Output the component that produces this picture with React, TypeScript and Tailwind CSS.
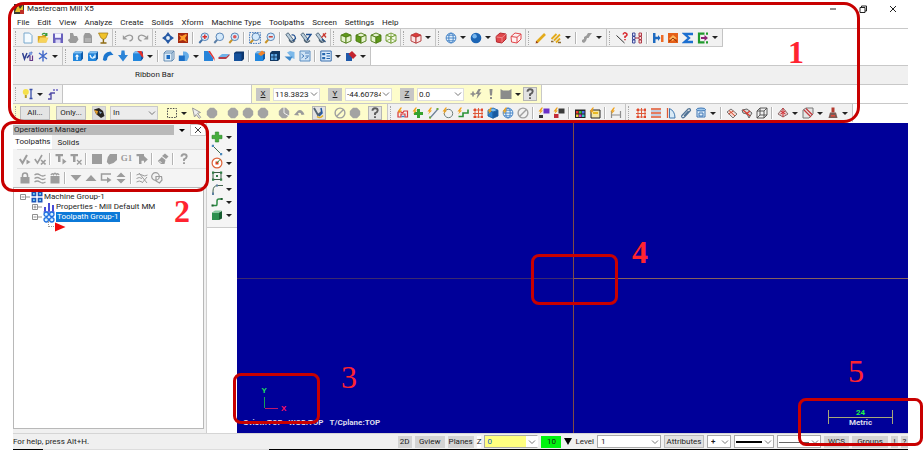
import type { ReactNode } from "react";

// Small shape helpers shared by the toolbar glyphs, all on a 12x12 grid
const line = (d: string, stroke: string, w = 1.2) => (
  <path d={d} fill="none" stroke={stroke} strokeWidth={w} />
);

const cube = (stroke: string, top: string, left: string, right: string) => (
  <g stroke={stroke} strokeWidth=".9" strokeLinejoin="round">
    <path d="M1 3.2 6 1l5 2.2L6 5.2z" fill={top} />
    <path d="M1 3.2 6 5.2v6L1 9z" fill={left} />
    <path d="M11 3.2 6 5.2v6L11 9z" fill={right} />
  </g>
);

const lens = (mark: ReactNode, handle = "#c99325") => (
  <>
    <path d="M4.3 7.7 1.3 11" stroke={handle} strokeWidth="2" />
    <circle cx="6.8" cy="4.8" r="3.8" fill="#d4e9fb" stroke="#5b87b8" />
    {mark}
  </>
);

const box = (mark: ReactNode, face = "#2186dd") => (
  <>
    <path d="M1 3.5 3 1.5h8v7L9 11H1z" fill="#0f5cab" />
    <path d="M1 3.5h8V11H1z" fill={face} />
    <path d="m1 3.5 2-2h8l-2 2z" fill="#7cc0f5" />
    {mark}
  </>
);

const globe = (
  <g fill="none" stroke="#3f7fc4" strokeWidth=".9">
    <circle cx="6" cy="6" r="4.9" fill="#e3f0fb" />
    <ellipse cx="6" cy="6" rx="2.2" ry="4.9" />
    <path d="M1 6h10M2 3.2h8M2 8.8h8" />
  </g>
);

const pen = (hook: string) => (
  <>
    <path d="m.8 2.5 2.4-1.7L8.5 8 6 9.5z" fill="#b9cddc" stroke="#4e6478" strokeWidth=".9" />
    {line(hook, "#1f4f91", 1.3)}
    {line("M4 7.5Q6 12.5 10 8.5", "#4b5f70", 1.3)}
  </>
);

const grid = (stroke: string, dot: string) => (
  <>
    {line("M1 3h10M1 6.5h10M1 10h10M3 1v10M6.5 1v10M10 1v10", stroke, 1)}
    <path d="M2 2h2v2H2zM9 2h2v2H9zM2 9h2v2H2zM9 9h2v2H9z" fill={dot} />
  </>
);

const oct = <path d="M4 .8h4L11.2 4v4L8 11.2H4L.8 8V4z" fill="#a3a3a3" />;
const spark = <path d="m3.5.5-3 4h2L1 7.5 5 3.6H3.2L5 .5z" fill="#f0a21b" />;
const question = (color: string) => line("M3.5 3.8Q3.5 1.3 6 1.3 8.7 1.3 8.7 3.6 8.7 5 6 6.4v1.5M6 9.2V11", color, 1.9);

const ICONS: Record<string, ReactNode> = {
  new: <path d="M2 1h5.5L10 3.5V11H2z" fill="#f5fbff" stroke="#79a8cd" />,
  open: <><path d="M.8 4h4l1-1h3.4v7.5H.8z" fill="#d9a520" /><path d="m1 10.5 2-5h8.5l-2 5z" fill="#f7d35a" />{line("M5 2.6Q7.5 0 9.5 3M9.8 1v2.3H7.6", "#35983b", 1.3)}</>,
  save: <><path d="M1 1.5h10V11H1z" fill="#6960bd" /><path d="M3 1.5h6v4.3H3z" fill="#f2f2ff" /><path d="M3.5 7.5h5V11h-5z" fill="#d8d5f4" /></>,
  puff: <path d="M3 1h3l1 3h3l1.5 3.5L9 11H3L.8 8 3 6.5z" fill="#9b9b9b" />,
  print: <><path d="M3 1h4.5L10 3.5V11H1.5V4z" fill="#9a9a9a" />{line("M3 7h6M3 9h6", "#c9c9c9", 1)}</>,
  cup: <><path d="M1.5 1H11L9 6 6.7 7.4 4 6z" fill="#f0c22a" stroke="#9c7615" strokeWidth=".7" />{line("M6.4 7v3.5M3.5 11h6", "#8e6b12", 1.4)}</>,
  undo: <>{line("M3 5Q8 1.5 10.3 4.5 11.5 8 7.5 9", "#9b9b9b", 1.4)}<path d="M.8 3v4.5h4.7z" fill="#9b9b9b" /></>,
  redo: <>{line("M9 5Q4 1.5 1.7 4.5.5 8 4.5 9", "#9b9b9b", 1.4)}<path d="M11.2 3v4.5H6.5z" fill="#9b9b9b" /></>,
  fit: <><path d="M6 0 8.5 3.5 12 6 8.5 8.5 6 12 3.5 8.5 0 6l3.5-2.5z" fill="#2559a5" /><circle cx="6" cy="6" r="1.9" fill="#e6f1fa" /></>,
  repaint: <><path d="M1 1h10v10H1z" fill="#a52a12" /><path d="m2 3 3 1 4-2 1 1-2 3 2 4-4-2-4 1 2-3z" fill="#ff9d2d" /></>,
  zoomIn: lens(line("M6.8 2.5v4.6M4.5 4.8h4.6", "#d9302c", 1.4), "#3f6ea6"),
  zoom: lens(null, "#5b7ea6"),
  zoomDot: lens(<circle cx="6.8" cy="4.8" r="1.8" fill="#de5757" />),
  zoomFrame: lens(<path d="M.6.6h10.8v10.8H.6z" fill="none" stroke="#3d77bd" strokeDasharray="1.5 1" />),
  zoomOut: lens(line("M4.8 4.8h4", "#c63328", 1.4)),
  penA: pen("M6.5 3Q10 2 10.5 6.5L8 9"),
  penB: pen("M6 2.5h5L7 8"),
  penC: <>{pen("M7 7l3.5 3")}{line("M6.5 5.5 11 1M8 1.5l3 4", "#cb3830", 1.3)}</>,
  cubeTop: cube("#4c7a12", "#5f9a1b", "#e6f3cf", "#e6f3cf"),
  cubeLeft: cube("#4c7a12", "#e6f3cf", "#5f9a1b", "#e6f3cf"),
  cubeRight: cube("#4c7a12", "#e6f3cf", "#e6f3cf", "#5f9a1b"),
  cubeIso: <>{cube("#6d9a2f", "#f6fbea", "#f6fbea", "#f6fbea")}{line("m1 9 5-2.5L11 9M6 1v5.5", "#6d9a2f", 0.7)}</>,
  cubeRed: cube("#b33434", "#e03b3b", "#fbe5e5", "#fbe5e5"),
  globe,
  ball: <><circle cx="6" cy="6" r="5.3" fill="#1c65b5" /><circle cx="4.6" cy="4.2" r="2.2" fill="#75b5ee" /></>,
  redSolid: <><path d="m1 4.5 4-3.5 6 1v5L7 11 1.5 10z" fill="#e0474b" stroke="#b52a30" />{line("m1.5 5 5.5.7 4-3.5M7 6v4.5", "#f39a9c", 0.8)}</>,
  redWire: <path d="m1 4.5 4-3.5 6 1v5L7 11 1.5 10zM1 4.5l6 .8L11 2M7 5.3V11" fill="#fff0f1" stroke="#e0474b" />,
  pencil: <><path d="M1.5 10.5 10 2" stroke="#e3aa1b" strokeWidth="2.6" /><path d="m.5 11.5.8-2.5L3 10.7z" fill="#8d3021" /></>,
  pencils: <><path d="m1.5 7 5-5M4 8.5l6-6M6 10.5l4-4" stroke="#e3aa1b" strokeWidth="1.8" />{line("M1 9.5h2.5M8 10.5h3", "#8a6a35", 1.5)}</>,
  greyStack: <path d="M1 10V8l2-1V5l2.5-1.5L7 1h4L9 3.5 7.5 6H6L5 9l-2 2z" fill="#9b9b9b" />,
  analyze: <>{line("m.5 3.5 8 7.5", "#333", 1)}{line("M7 2.5Q8-.2 10.5 1.5 12 3.5 9 4.5V6M9 7v1.3", "#d8252a", 1.5)}</>,
  chain: <><path d="M1.5 1H4v3H1.5zM1.5 4.5H4v3H1.5zM1.5 8H4v3H1.5z" fill="#dfe4ff" stroke="#2f3d8f" strokeWidth=".9" /><path d="M8 1h2.5v3H8zM8 4.5h2.5v3H8zM8 8h2.5v3H8z" fill="#ffd9d9" stroke="#a82d3a" strokeWidth=".9" />{line("M4 6h4", "#a82d3a", 1)}</>,
  compare: <><path d="M1 1h2.5v10H1z" fill="#1d6ac0" /><path d="M3 4.8h3V3l2.5 3L6 9V7.2H3z" fill="#1d6ac0" /><path d="M9 3h2.5v7H9z" fill="#ee6a25" /></>,
  orange: <><path d="M1 1h10v10H1z" fill="#e45f18" /><path d="m2 7 4-4 4 3.5-3 .5-1 2z" fill="#ffb75e" />{line("M2 9.5 6 6l4 3.5", "#8e3208", 1)}</>,
  sigma: line("M11 2H2.5L7 6l-4.5 4H11", "#1c6fd0", 2.3),
  bracket: <>{line("M7.5 1.7H2v8.6h5.5M9 1.7h2M9 10.3h2", "#20992c", 2.2)}<path d="M4 5h3.5V3L11 6 7.5 9V7H4z" fill="#8c2475" /></>,

  tool: <>{line("m.5 3 2 6L5 3M5 8l5-6", "#2e3f91", 1.5)}<circle cx="8.5" cy="3.5" r="1.7" fill="#7c9ce0" />{line("M8 5.5v5h2.5v-5", "#653889", 1.2)}</>,
  asterisk: line("M6 .5v11M2 3l8 6M10 3 2 9", "#4068c8", 1.4),
  extrude: box(<path d="M4.3 10V6.5H2.8L5 4.2l2.3 2.3H5.8V10z" fill="#fff" />),
  revolve: box(line("M3 5q1.5 5 5 2M8 4.5V7H6", "#e5f4ff", 1.3)),
  sweep: <path d="M.8 10Q1 2 8.5 1.5l3 3.5Q5 4.5 5 10L3 11z" fill="#1c76ce" />,
  loft: <path d="M4.5.5h3L8 5h3l-5 6.5L1 5h3z" fill="#2b84d8" />,
  fillet: box(<path d="M5 1h4.5Q11.5 4 11.5 8L9 6Q8 3.5 5 1z" fill="#e2312c" />),
  shell: <><path d="m1 3 2-2h8v8l-2 2H1z" fill="#dcebf7" stroke="#4d79a5" strokeWidth=".8" /><path d="M3.5 5H7v4H3.5z" fill="#1c6cc2" />{line("M1 3h8v8M9 3l2-2", "#4d79a5", 0.8)}</>,
  bool: <><path d="M5 1.5Q11 1 11 7L9 11H5z" fill="#67aee9" /><path d="M.8 5.5h6V11h-6z" fill="#1b6fc6" /></>,
  draft: <><path d="M1 1h4l5 7v3H1z" fill="#2784d9" /><path d="M5 1h2l4.5 7v3L10 8z" fill="#df3434" /></>,
  slab: <><path d="M.5 7 4 4h7.5L8 7z" fill="#6eb1e8" /><path d="M.5 7H8l3.5-3v1.5L8 9H.5z" fill="#b23b49" /></>,
  block: <><path d="m1 3 2-1.5h8V9l-2 2H1z" fill="#0d376e" /><path d="M1 3.5h7.5V11H1z" fill="#14509a" /></>,
  pull: box(<path d="m4 4 4-3.500L11.500 3 7 6z" fill="#f08229" />),
  panes: <><path d="m1 3 2-2h8v8l-2 2H1z" fill="#123862" /><path d="M2 4h2.5v2.5H2zM5.5 4H8v2.5H5.5zM2 7.5h2.5V10H2zM5.5 7.5H8V10H5.5z" fill="#5ea6e2" /></>,
  drop: <><path d="M3 2.5 6 1l4.500 1v7L8 8z" fill="#7db9ea" /><path d="M.5 6.5h8L6 11z" fill="#3d87c9" /></>,
  layout: <><path d="M1 1h10v10H1z" fill="#cfe3f5" stroke="#5a8ec2" />{line("M2.5 4 5 6 2.5 8M6 3h4M6.5 6H10M6 9l3-2", "#3a73b3", 0.9)}</>,
  list: <><path d="M.8 1h10.4v10H.8z" fill="#dcebfa" stroke="#386fae" /><path d="M2.2 3h3v2.3h-3zM2.2 7h3v2.3h-3z" fill="#2667ae" />{line("M6.5 3.5H10M6.5 6H10M6.5 8.5H10", "#2667ae", 1)}</>,
  merge: <><path d="M1 3h6v8H1z" fill="#1f59a9" /><path d="M3.5 4 7 1l4.5 4.5L8 9z" fill="#c4242f" /></>,

  bulb: <><circle cx="3.8" cy="4" r="3" fill="#f5e04a" /><path d="M2.8 7h2v3h-2z" fill="#b59d2d" />{line("M9 1.5v9M7.5 1.5h3M7.5 10.5h3", "#3a4fa8", 1.3)}</>,
  route: <>{line("M1 11h3V5h4M2 7l2-2", "#514ba5", 1.4)}<path d="M6 1h2v2H6zM9 1h2v2H9z" fill="#8e88d0" /></>,
  plusBolt: <>{line("M.5 6h5M3 3.5v5", "#8b8b8b", 1.6)}<path d="m8.5 1-3 5h2.3l-1.3 5 5-6.5H9L11 1z" fill="#8b8b8b" /></>,
  bang: <path d="M4.5 1h3L7 7.5H5zM5 9h2v2H5z" fill="#8b8b8b" />,
  slabGrey: <path d="M.5 1 3 2.5h6L11.5 1v10H.5z" fill="#8b8b8b" />,
  question: question("#5d5d5d"),

  picker: <><path d="M1 2.5 6 1l4 3 1.5 5L8 11 3 7z" fill="#26231f" /><path d="m1 3 4 1-1 4z" fill="#e8a02a" /><path d="m6 4 3 1.5L7 7z" fill="#8aa9c9" /></>,
  marquee: <path d="M1.5 1.5h9v9h-9z" fill="none" stroke="#4b4b4b" strokeDasharray="1.5 1.2" />,
  cursor: <path d="m1.5 1 8 4.5-3 .8 3.2 4-1.5 1-3-3.8L3.500 10z" fill="#ededed" stroke="#9a9a9a" />,
  oct,
  octCut: <>{oct}{line("M6 6V.5M6 6l5 3", "#f0f0f0", 1)}</>,
  back: <path d="M1 8 5 3.5q4-2 6.5 4l-3 .5Q8 5 5 6l1 2.5z" fill="#9b9b9b" />,
  pick: <>{line("m1 1 4 7 3.5-3", "#506172", 1.8)}{line("M4 9.5q3 2.5 6-1", "#e2b12a", 1.5)}{line("M8 1 9 6 6 9", "#2156a0", 1.5)}</>,
  none: <>{line("M2.5 9.5l7-7", "#a0a0a0", 1.4)}<circle cx="6" cy="6" r="4.9" fill="none" stroke="#a0a0a0" strokeWidth="1.4" /></>,
  snap: <>{line("M1 10V5.5Q2 3.5 4 5t3-1h3.5V10H8V7H4v3z", "#d9363a", 1.2)}{line("M4.5 9.5h3", "#3f7fc4", 1.4)}{spark}</>,
  plus: <path d="M4.3 1h3.4v3.300H11v3.400H7.700V11H4.300V7.700H1V4.300h3.300z" fill="#45ad3c" stroke="#2a8528" strokeWidth=".6" />,
  plusSpark: <><path d="M5 2h3v3h3v3H8v3H5V8H2V5h3z" fill="#35a22e" />{spark}</>,
  endpoint: <>{line("M3 11 10.5 2.5", "#6d7f96", 1.2)}{spark}<path d="M9.5 1h2v2h-2zM2 9.5h2v2H2z" fill="#69a83c" /></>,
  circle: <><circle cx="6.5" cy="6.5" r="4.2" fill="none" stroke="#6f7f7c" />{spark}</>,
  curveSpark: <>{line("M1.5 9.5H6V6h5V2.5", "#2b9235", 1.6)}{spark}</>,
  gridRed: grid("#de5a3a", "#e2452c"),
  cubeBlue: <>{cube("#1b62a6", "#7cbdee", "#2a81cf", "#17599f")}{spark}</>,
  globeSpark: <>{globe}{spark}</>,
  purple: <><path d="M5.5 1.5h6v5h-6z" fill="#6a2fc9" /><path d="M1 8h4v3H1z" fill="#333" />{spark}</>,
  redSq: <><path d="M5.5 1.5h6v5h-6z" fill="#3a3a3a" /><path d="M1 7h4.5v4H1z" fill="#c22b3a" />{spark}</>,
  palette: <><path d="M1 2.5h10.5V11H1z" fill="#222" /><path d="M2 4h2.5v2.5H2z" fill="#ef3f33" /><path d="M5 4h2.5v2.5H5z" fill="#37c441" /><path d="M8 4h2.5v2.5H8z" fill="#4c6df0" /><path d="M2 7.5h2.5V10H2z" fill="#f2d33d" /><path d="M5 7.5h2.5V10H5z" fill="#d43fce" /><path d="M8 7.5h2.5V10H8z" fill="#36c6c6" /></>,
  colorBox: <><path d="M2 3h9v8H2z" fill="#f4e6a3" stroke="#252525" /><path d="M4 5h5v2H4z" fill="#e8b923" />{spark}</>,
  dimension: <>{line("M1.5 4v7M10.5 4v7M2 8h8.5", "#8d8d8d", 1.2)}{spark}</>,
  rowsRed: <>{line("M1 2h10M1 6h10M1 10h10", "#e0552f", 1.5)}{line("M1 4h10M1 8h10", "#6f91bf", 0.7)}</>,
  sector: <><path d="M2.5 1v10" stroke="#dd5b35" strokeWidth="1.3" /><path d="M4.5 1.5Q10 4 10 11H4.5z" fill="#d9eaf6" stroke="#3f78b1" /></>,
  clip: line("M1.5 9 8 2q2.5-1 2.5 1.5l-6 6.5Q2 12 1.5 9M4 9l4.5-5", "#4f7295", 1.2),
  cylinder: <><path d="M2 2.5h8V10H2z" fill="#e1effb" stroke="#3c74b3" /><ellipse cx="6" cy="2.5" rx="4.5" ry="1.5" fill="#9dc7ec" stroke="#3c74b3" />{line("M4 6h4v3H4z", "#3c74b3", 1)}</>,
  meshA: <><path d="m1 5 4-3 6 5-4 4z" fill="#f5d8d0" stroke="#777" />{line("m3 3.5 6 5.5M2.5 7l5-3", "#d6492e", 1)}</>,
  meshB: <><path d="m1 3 5-1 5 4-3 5-2-4-4-1z" fill="#d8d8d8" stroke="#666" />{line("M2 3l7 6M9 4 5 7", "#d6392e", 1.2)}</>,
  wire: line("M1 4h7v7H1zM4 1h7v7M1 4l3-3M8 4l3-3M8 11l3-3M4 1v7h7M1 11l3-3", "#4b4b4b", 0.9),
  prism: <><path d="m6 1 5 6-5 3-5-3z" fill="#e6cccc" stroke="#8a6a6a" />{line("M6 1v9M3.5 4l5 3M8.5 4l-5 3", "#d12f35", 1)}</>,
  hatch: <><path d="M1 3 4 1h7v6l-4 4H1z" fill="#e6e6e6" stroke="#777" />{line("m2 3 7 7M4 1.5 10.5 8", "#c5393d", 1.3)}</>,
  mill: <><path d="M4.5.5h3v5h-3z" fill="#b33a2f" /><path d="M3 5.5h6l1.500 5.500h-9z" fill="#7c5a54" /><path d="M4 8h4v1.5H4z" fill="#e14a3c" /></>,

  line: <>{line("m2 2 8 8", "#3d6a4a", 1)}<path d="M.8.8H3V3H.8zM9 9h2.2v2.2H9z" fill="#4a87b9" /></>,
  arcCircle: <><circle cx="6" cy="6" r="4.9" fill="#fff" stroke="#dd6339" strokeWidth="1.2" /><path d="M4.5 4.5h3v3h-3z" fill="#e2411f" />{line("m6 6 3-3.5", "#2a9140", 1)}</>,
  rect: <><path d="M2 2.5h8v7H2z" fill="none" stroke="#3b5c45" /><path d="M1 1.5h2.2v2.2H1zM9 1.5h2.200v2.200H9zM1 8.500h2.200v2.200H1zM9 8.500h2.200v2.200H9zM5 5h2v2H5z" fill="#2f7c45" /></>,
  filletLine: <>{line("M2 11V8Q2 2.5 7 2.5h5", "#44654f", 1)}<path d="M1 9.5h2V12H1zM5 1.5h2v2H5z" fill="#5c7f9f" /></>,
  curve: <>{line("M1.5 9.5h4Q6 9.5 6 7V5q0-2 2-2h3", "#2c8b43", 1.5)}<path d="M.5 8.5h2v2h-2zM9.7 2h2v2h-2z" fill="#205e30" /></>,
  solidGreen: <><path d="M1 3.5h7V11H1z" fill="#2b8f4e" /><path d="M8 3.5 11 2v7.5L8 11z" fill="#165c30" /><path d="m1 3.5 3-2h7l-3 2z" fill="#85caa0" /></>,

  chkRun: <>{line("m.8 6 2.7 4L8 2", "#9c9c9c", 2)}<path d="M7.5 6.5v5l4-2.5z" fill="#9c9c9c" /></>,
  chkX: line("m.8 6 2.7 4L8 2M7 7l4.5 4.5M11.5 7 7 11.5", "#9c9c9c", 1.6),
  tRun: <><path d="M.5 1H8v2.3H5.5V9H3V3.3H.5z" fill="#9c9c9c" /><path d="M7.5 5.5v6l4-3z" fill="#9c9c9c" /></>,
  tX: <><path d="M.5 1H8v2.3H5.5V9H3V3.3H.5z" fill="#9c9c9c" />{line("m7 7 4.5 4.5M11.5 7 7 11.5", "#9c9c9c", 1.3)}</>,
  sq: <path d="M1 1h10v10H1z" fill="#9c9c9c" />,
  lump: <path d="M4 1h7v6l-3.500 3L3 11.500.8 9l1-5z" fill="#9c9c9c" />,
  tArrow: <path d="M.5 1H8v2l3.8 3.5L8 10V7.7H5.5V11H3V3.3H.5z" fill="#9c9c9c" />,
  feed: <><path d="m5 3 3-2.5 3.5 3L9 6z" fill="#9c9c9c" /><path d="m.8 8 4-4 3.7 3-1 4H4z" fill="#9c9c9c" />{line("m2.5 8 2 2", "#f4f4f4", 1)}</>,
  questionGrey: question("#9c9c9c"),
  lock: <><path d="M1.5 5h9v6.5h-9z" fill="#9c9c9c" />{line("M3.5 5V3.5Q3.5 1 6 1t2.5 2.5V5", "#9c9c9c", 1.5)}</>,
  waves: line("M.5 3q2.700-2 5.500 0t5.500 0M.5 6.500q2.700-2 5.500 0t5.500 0M.5 10q2.700-2 5.500 0t5.500 0", "#9c9c9c", 1.3),
  bag: <><path d="M1.5 4h9v7.5h-9z" fill="#9c9c9c" />{line("M2 3q1-2 2.5-.5Q6 0 7.5 2.5 9 1 10 3", "#9c9c9c", 1.5)}</>,
  down: <path d="M.5 3h11L6 9z" fill="#9c9c9c" />,
  up: <path d="M.5 9h11L6 3z" fill="#9c9c9c" />,
  insert: <>{line("M11 2H1.5v6H8", "#9c9c9c", 1.5)}<path d="M7 5v6l4.5-3z" fill="#9c9c9c" /></>,
  scroll: <path d="M6 .5 10.500 5h-9zM6 11.500 1.500 7h9z" fill="#9c9c9c" />,
  wavesX: line("M.5 3q2.700-2 5.500 0t5.500 0M.5 6.500q2.700-2 5.500 0M.5 10q2.700-2 5.500 0M3 1l8 10M11 5l-5 6", "#9c9c9c", 1),
  overlap: <g fill="none" stroke="#9c9c9c" strokeWidth="1.2"><circle cx="4.5" cy="4.5" r="3.8" /><path d="M5 4.5h5.5L11 8l-2.500 3L5 9z" /></g>,

  app: <><path d="M1 1h10v10H1z" fill="#3b3b32" /><path d="m2 9 3-7 2 4 3-4v7z" fill="#e5c12c" /><path d="M7 7h4v4H7z" fill="#bf3026" /></>,
  group: <><path d="M.5.5h4.800v4.800H.5zM6.700.5h4.800v4.800H6.700zM.5 6.700h4.800v4.800H.5zM6.700 6.700h4.800v4.800H6.700z" fill="#1c55b8" /><path d="M2 2h1.800v1.800H2zM8.200 2H10v1.800H8.200zM2 8.200h1.800V10H2zM8.200 8.200H10V10H8.200z" fill="#6fd3f2" /></>,
  bars: <>{line("M2 6v4.5M6 2v8.5M10 4v6.5", "#2a2fd0", 1.7)}{line("M.5 11h11", "#2a2fd0", 1)}</>,
  tpGroup: <g fill="#d8f2ff" stroke="#1d6fe0" strokeWidth="1.3"><circle cx="3.2" cy="3.2" r="2.2" /><circle cx="8.8" cy="3.2" r="2.2" /><circle cx="3.2" cy="8.8" r="2.2" /><circle cx="8.8" cy="8.8" r="2.2" /></g>,
  play: <path d="M1 1.5 11.5 6 1 10.5z" fill="#f00a0a" />,
};

function Icon({ name }: { name: string }) {
  return (
    <svg viewBox="0 0 12 12" className="size-3 shrink-0" aria-hidden="true">
      {ICONS[name]}
    </svg>
  );
}

function Chevron() {
  return (
    <svg viewBox="0 0 8 8" className="pointer-events-none absolute right-0.5 top-1/2 size-2 -translate-y-1/2" aria-hidden="true">
      <path d="m1 2.5 3 3 3-3" fill="none" stroke="#777" />
    </svg>
  );
}

// "|" draws a separator, "v" a drop-down arrow, anything else is an icon
function Tools({ items }: { items: string }) {
  return (
    <>
      {items.split(" ").map((item, i) => {
        if (item === "|") return <span key={i} className="mx-[2px] h-3 w-[2px] shrink-0 border-l border-[#b4b4b4] bg-white" />;
        if (item === "v") {
          return (
            <button key={i} aria-label="More options" className="flex h-4 w-2.5 shrink-0 items-center justify-center">
              <span className="border-x-[3px] border-t-[3px] border-x-transparent border-t-[#222]" />
            </button>
          );
        }
        return (
          <button key={i} aria-label={item} className="flex h-4 w-[15px] shrink-0 items-center justify-center hover:bg-sky-100">
            <Icon name={item} />
          </button>
        );
      })}
    </>
  );
}

function Grip() {
  return <span className="mx-[2px] h-3.5 w-[3px] shrink-0 border-l border-dotted border-[#a8a8a8]" />;
}

function Group({ items }: { items: string }) {
  return (
    <div className="flex h-full shrink-0 items-center border-r border-[#c4c4c4] bg-[#f1f1f1] pr-[2px]">
      <Grip />
      <Tools items={items} />
    </div>
  );
}

function Coord({ axis, value }: { axis: string; value: string }) {
  return (
    <div className="flex shrink-0 items-center gap-[3px]">
      <button aria-label={`Lock ${axis}`} className="h-[13px] w-3.5 bg-[#c6c6c6] leading-3 underline">{axis}</button>
      <div className="relative">
        <input aria-label={axis} defaultValue={value} className="block h-[13px] w-[47px] border border-[#ddd] bg-white pl-px pr-2.5 leading-3" />
        <Chevron />
      </div>
    </div>
  );
}

const MENU = ["File", "Edit", "View", "Analyze", "Create", "Solids", "Xform", "Machine Type", "Toolpaths", "Screen", "Settings", "Help"];

const SKETCH_TOOLS = ["plus", "line", "arcCircle", "rect", "filletLine", "curve", "solidGreen"];

function Header() {
  return (
    <header>
      <div className="flex h-[17px] items-center gap-[2px]">
        <Icon name="app" />
        <h1 className="flex-1">Mastercam Mill X5</h1>
        <div className="flex gap-[18px] pr-[9px]">
          <button aria-label="Minimize"><svg viewBox="0 0 12 12" className="size-3"><path d="M3 6h6" stroke="#222" /></svg></button>
          <button aria-label="Restore"><svg viewBox="0 0 12 12" className="size-3"><path d="M3 4.5h5v5H3zM4.5 4.5V3h5v5H8" fill="none" stroke="#222" /></svg></button>
          <button aria-label="Close"><svg viewBox="0 0 12 12" className="size-3"><path d="m3 3 6 6M9 3 3 9" stroke="#222" /></svg></button>
        </div>
      </div>
      <nav className="flex h-[11px] items-center gap-2 pl-1">
        {MENU.map((m) => (
          <button key={m} className="shrink-0">{m}</button>
        ))}
      </nav>
      <div className="flex h-[19px] border-t border-[#c8c8c8]">
        <div className="flex border-b border-[#c8c8c8]">
          <Group items="new open save puff print cup" />
          <Group items="undo redo" />
          <Group items="fit repaint | zoomIn zoom zoomDot | zoomFrame zoomOut | penA penB penC" />
          <Group items="cubeTop cubeLeft cubeRight cubeIso" />
          <Group items="cubeRed v" />
          <Group items="globe v ball v redSolid redWire" />
          <Group items="pencil pencils v | greyStack v" />
          <Group items="analyze chain | compare orange sigma bracket v" />
        </div>
      </div>
      <div className="flex h-[18px]">
        <Group items="tool asterisk v" />
        <Group items="extrude revolve sweep loft fillet v | shell bool v draft slab block | pull panes drop layout | list v merge v" />
      </div>
      <div className="flex h-5 items-center border-y border-[#c8c8c8] bg-[#f0f0f0] pl-[122px]">Ribbon Bar</div>
      <div className="flex h-[18px]">
        <Group items="bulb v route" />
        <div className="ml-[188px] flex shrink-0 items-center border-x border-[#c8c8c8] bg-[#fdfccb] px-1">
          <div className="flex items-center gap-2">
            <Coord axis="X" value="118.38235" />
            <Coord axis="Y" value="-44.60784" />
            <Coord axis="Z" value="0.0" />
          </div>
          <div className="flex items-center pl-1">
            <Tools items="plusBolt bang slabGrey v" />
            <button aria-label="Help" className="border border-[#b5b5b5] bg-[#e2e2e2]"><Icon name="question" /></button>
          </div>
        </div>
      </div>
      <div className="flex h-[19px] border-t border-[#c8c8c8]">
        <div className="flex w-[375px] shrink-0 items-center overflow-hidden border-r border-[#c8c8c8] bg-[#fdfccb]">
          <Grip />
          <button className="h-3.5 w-[30px] shrink-0 border border-[#bdbdbd] bg-[#e4e4e4]">All...</button>
          <button className="ml-1.5 h-3.5 w-[30px] shrink-0 border border-[#bdbdbd] bg-[#e4e4e4]">Only...</button>
          <button aria-label="Select last" className="ml-1.5 shrink-0 border border-[#ccc] bg-[#ddd]"><Icon name="picker" /></button>
          <div className="relative ml-1 shrink-0">
            <select aria-label="Selection mode" className="block h-3.5 w-12 appearance-none border border-[#c9c9c9] bg-[#ececec] pl-[2px]"><option>In</option></select>
            <Chevron />
          </div>
          <div className="ml-1.5 flex items-center"><Tools items="marquee v cursor oct" /></div>
          <div className="ml-1.5 flex items-center"><Tools items="oct oct oct" /></div>
          <div className="ml-1.5 flex items-center"><Tools items="octCut back" /></div>
          <button aria-label="Verify" className="ml-1.5 shrink-0 border border-[#b5b5b5] bg-[#e2e2e2]"><Icon name="pick" /></button>
          <div className="ml-1.5 flex items-center"><Tools items="none oct" /></div>
          <button aria-label="Selection help" className="ml-1.5 shrink-0 border border-[#b5b5b5] bg-[#e2e2e2]"><Icon name="question" /></button>
        </div>
        <Group items="snap plusSpark endpoint circle curveSpark gridRed cubeBlue globeSpark none | purple redSq | palette colorBox | dimension" />
        <Group items="gridRed rowsRed sector clip cylinder v | meshA meshB wire | prism v hatch v mill v" />
      </div>
    </header>
  );
}

function Twig({ open }: { open: boolean }) {
  return (
    <svg viewBox="0 0 12 10" className="h-2.5 w-3 shrink-0" aria-hidden="true">
      <path d="M2.5 2.5h5v5h-5zM3.5 5h3M8 5h4" fill="none" stroke="#909090" />
      {!open && <path d="M5 3.5v3" stroke="#909090" />}
    </svg>
  );
}

function OperationsManager() {
  return (
    <aside className="flex w-[194px] shrink-0 flex-col border-r border-[#cfcfcf] bg-[#f0f0f0] pt-[2px]">
      <div className="flex h-2.5 items-center">
        <h2 className="h-full flex-1 bg-[#b9b9b9] pl-px leading-[10px]">Operations Manager</h2>
        <button aria-label="Panel menu" className="flex h-3 w-4 items-center justify-center">
          <span className="border-x-[3px] border-t-[3px] border-x-transparent border-t-black" />
        </button>
        <button aria-label="Close panel" className="flex h-3 w-4 items-center justify-center border border-[#ccc] bg-white">
          <svg viewBox="0 0 8 8" className="size-2"><path d="m1 1 6 6M7 1 1 7" stroke="#444" /></svg>
        </button>
      </div>
      <div className="flex h-3.5">
        <button className="bg-white px-[2px]">Toolpaths</button>
        <button className="px-[5px] pt-px">Solids</button>
      </div>
      <div className="bg-[#f4f4f4] pl-1">
        <div className="flex h-[19px] items-center border-t border-[#dedede]">
          <Tools items="chkRun chkX | tRun tX | sq lump" />
          <button className="w-[15px] font-[Liberation_Serif,serif] text-[9px] font-bold text-[#9c9c9c]">G1</button>
          <Tools items="tArrow | feed | questionGrey" />
        </div>
        <div className="flex h-[19px] items-center border-t border-[#dedede]">
          <Tools items="lock waves bag | down up insert scroll | wavesX overlap" />
        </div>
      </div>
      <ul className="mb-1 mr-[2px] flex-1 border border-[#b8b8b8] bg-white pl-1 pt-1 leading-[10px]">
        <li className="flex h-2.5 items-center gap-px"><Twig open /><Icon name="group" />Machine Group-1</li>
        <li className="flex h-2.5 items-center gap-px pl-3"><Twig open={false} /><Icon name="bars" />Properties - Mill Default MM</li>
        <li className="flex h-2.5 items-center gap-px pl-3"><Twig open /><Icon name="tpGroup" /><span className="bg-[#0b79d8] px-px text-white">Toolpath Group-1</span></li>
        <li className="flex h-2.5 items-center pl-[30px]">
          <span className="mb-1.5 h-1.5 w-1.5 border-b border-l border-dotted border-[#999]" />
          <Icon name="play" />
        </li>
      </ul>
    </aside>
  );
}

function Viewport() {
  return (
    <main className="relative flex-1 overflow-hidden bg-[#000099]">
      <div className="absolute left-0 top-1/2 h-px w-1/2 bg-[#3c2a6e]" />
      <div className="absolute right-0 top-1/2 h-px w-1/2 bg-[#86605c]" />
      <div className="absolute left-1/2 top-0 h-full w-px bg-[#7d4c46]" />
      <svg viewBox="0 0 30 30" className="absolute bottom-4.5 left-5 size-[30px]">
        <path d="M7.5 12v11" stroke="#15a05a" />
        <path d="M8 23.5h13" stroke="#c0186a" />
        <text x="4.5" y="8" fill="#1fe05a" fontSize="8" fontWeight="bold" fontFamily="Liberation Sans">Y</text>
        <text x="24" y="26" fill="#ff1060" fontSize="8" fontWeight="bold" fontFamily="Liberation Sans">X</text>
      </svg>
      <p className="absolute bottom-1 left-1.5 flex gap-1.5 font-bold leading-3 text-[#dcdcec]">
        <span>Gview:TOP</span><span>WCS:TOP</span><span>T/Cplane:TOP</span>
      </p>
      <div className="absolute bottom-1.5 right-[15px] w-[65px] text-center font-bold leading-[9px]">
        <div className="text-[#1ff04a]">24</div>
        <div className="border-t border-[#a8a878] text-[#dcdcec]">Metric</div>
        <span className="absolute left-0 top-[2px] h-3.5 w-px bg-[#a8a878]" />
        <span className="absolute right-0 top-[2px] h-3.5 w-px bg-[#a8a878]" />
      </div>
    </main>
  );
}

function StatusBar() {
  return (
    <footer className="flex h-4 items-center gap-[3px] border-t border-[#d5d5d5] bg-[#f0f0f0] leading-3">
      <span className="flex-1">For help, press Alt+H.</span>
      <button className="h-3 w-3.5 bg-[#d3d3d3]">2D</button>
      <button className="h-3 w-[30px] bg-[#d3d3d3]">Gview</button>
      <button className="h-3 w-[26px] bg-[#d3d3d3]">Planes</button>
      <label htmlFor="depth" className="bg-white">Z</label>
      <div className="relative">
        <input id="depth" defaultValue="0" className="block h-[13px] w-[54px] border border-[#aaa] border-r-white bg-[#ffff80] pl-[2px] text-[#0b62c4]" />
        <span className="absolute inset-y-px right-0 w-3 bg-white" />
        <Chevron />
      </div>
      <button className="h-3 w-5 bg-[#00f510]">10</button>
      <button aria-label="Color list" className="flex h-3 w-2 items-center justify-center">
        <span className="border-x-[4px] border-t-[7px] border-x-transparent border-t-black" />
      </button>
      <label htmlFor="level">Level</label>
      <div className="relative">
        <select id="level" className="block h-[13px] w-16 appearance-none border border-[#aaa] bg-white pl-[3px]"><option>1</option></select>
        <Chevron />
      </div>
      <button className="h-[13px] w-10 border border-[#bbb] bg-[#e2e2e2]">Attributes</button>
      <div className="relative">
        <select aria-label="Point style" className="block h-[13px] w-6 appearance-none border border-[#aaa] bg-white pl-[3px] font-bold"><option>+</option></select>
        <Chevron />
      </div>
      <div className="relative">
        <select aria-label="Line style" className="block h-[13px] w-10 appearance-none border border-[#aaa] bg-white" />
        <span className="absolute left-[2px] top-1/2 h-[2px] w-[26px] -translate-y-1/2 bg-black" />
        <Chevron />
      </div>
      <div className="relative">
        <select aria-label="Line width" className="block h-[13px] w-11 appearance-none border border-[#aaa] bg-white" />
        <span className="absolute left-[2px] top-1/2 h-px w-[30px] bg-[#666]" />
        <Chevron />
      </div>
      <button className="h-3 w-[25px] bg-[#d3d3d3]">WCS</button>
      <button className="h-3 w-9 bg-[#d3d3d3]">Groups</button>
      <button className="h-3 w-[7px] bg-[#d3d3d3]">!</button>
      <button className="h-3 w-[7px] bg-[#d3d3d3]">?</button>
    </footer>
  );
}

// Numbered red frames laid over the regions of the window
function Callouts() {
  return (
    <div className="pointer-events-none absolute inset-0 font-[Liberation_Serif,serif] text-[32px] leading-8 text-[#ff2430]">
      <div className="absolute left-2 right-16 top-[2px] h-[121px] rounded-2xl border-[3px] border-[#c80000]" />
      <div className="absolute left-px top-[121px] h-[71px] w-[208px] rounded-xl border-[3px] border-[#c80000]" />
      <div className="absolute bottom-[30px] left-[233px] h-[51px] w-[87px] rounded-lg border-[3px] border-[#c80000]" />
      <div className="absolute left-[531px] top-[254px] h-[51px] w-[87px] rounded-lg border-[3px] border-[#c80000]" />
      <div className="absolute bottom-2 right-px h-12 w-[125px] rounded-lg border-[3px] border-[#c80000]" />
      <span className="absolute right-[120px] top-9 font-bold">1</span>
      <span className="absolute left-[174px] top-[195px] font-bold">2</span>
      <span className="absolute bottom-[61px] left-[341px]">3</span>
      <span className="absolute left-[632px] top-[236px] font-bold">4</span>
      <span className="absolute bottom-[67px] right-[60px]">5</span>
    </div>
  );
}

export default function App() {
  return (
    <div className="relative flex min-h-screen flex-col overflow-hidden bg-white pb-1 pl-[13px] pr-4 font-[Roboto,sans-serif] text-[8px] text-[#1c1c1c]">
      <Header />
      <div className="flex flex-1 pt-px">
        <OperationsManager />
        <div className="flex w-[30px] shrink-0 flex-col">
          <div className="flex flex-col gap-px border-b border-[#ccc] bg-[#f5f5f5] pb-1.5 pt-2">
            {SKETCH_TOOLS.map((tool) => (
              <div key={tool} className="flex h-3 items-center pl-[2px]">
                <Tools items={`${tool} v`} />
              </div>
            ))}
          </div>
        </div>
        <Viewport />
      </div>
      <StatusBar />
      <div className="flex h-px">
        <span className="w-[30px] bg-black" />
        <span className="w-[226px] bg-[#ddd]" />
        <span className="flex-1 bg-black" />
      </div>
      <Callouts />
    </div>
  );
}
